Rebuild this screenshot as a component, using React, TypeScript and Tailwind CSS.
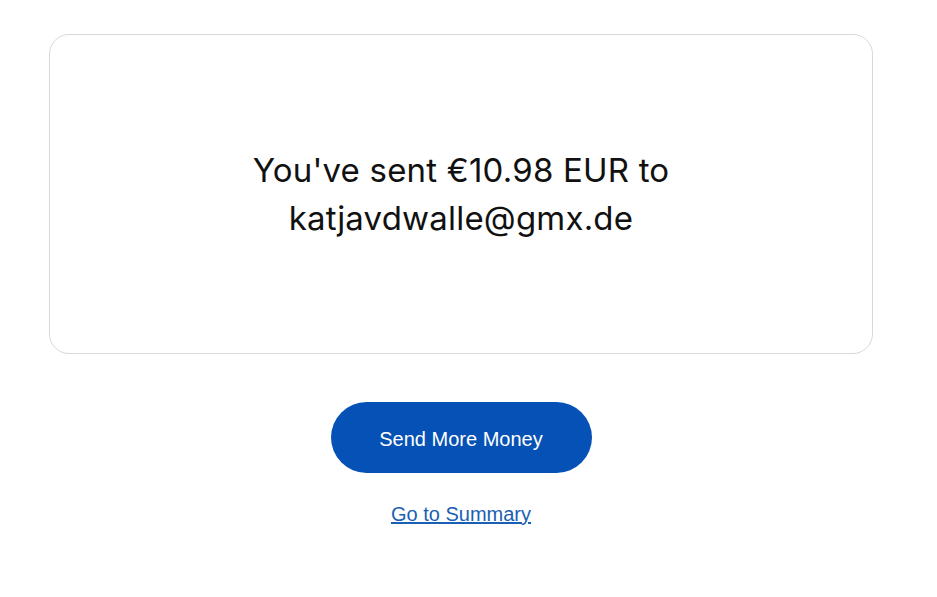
import React from 'react';

const App = () => {
  return (
    <div className="min-h-screen bg-white pt-[34px] pl-[49px]" style={{ fontFamily: '"Liberation Sans", Arial, sans-serif' }}>
      <div className="w-[824px] flex flex-col items-center">
        <div className="w-full h-[320px] border border-[#d9d9d9] rounded-[20px] flex items-center justify-center">
          <h1 className="text-center text-[33px] leading-[48px] tracking-[0.2px] text-[#111111] font-normal" style={{ fontFamily: 'Inter, "Liberation Sans", sans-serif' }}>
            You've sent €10.98 EUR to
            <br />
            katjavdwalle@gmx.de
          </h1>
        </div>

        <button className="mt-[48px] w-[261px] h-[71px] rounded-full bg-[#0551b5] text-white text-[20px] pt-[3px]">
          Send More Money
        </button>

        <a href="#" className="mt-[26px] text-[20px] text-[#1a5fb4] underline">
          Go to Summary
        </a>
      </div>
    </div>
  );
};

export default App;
